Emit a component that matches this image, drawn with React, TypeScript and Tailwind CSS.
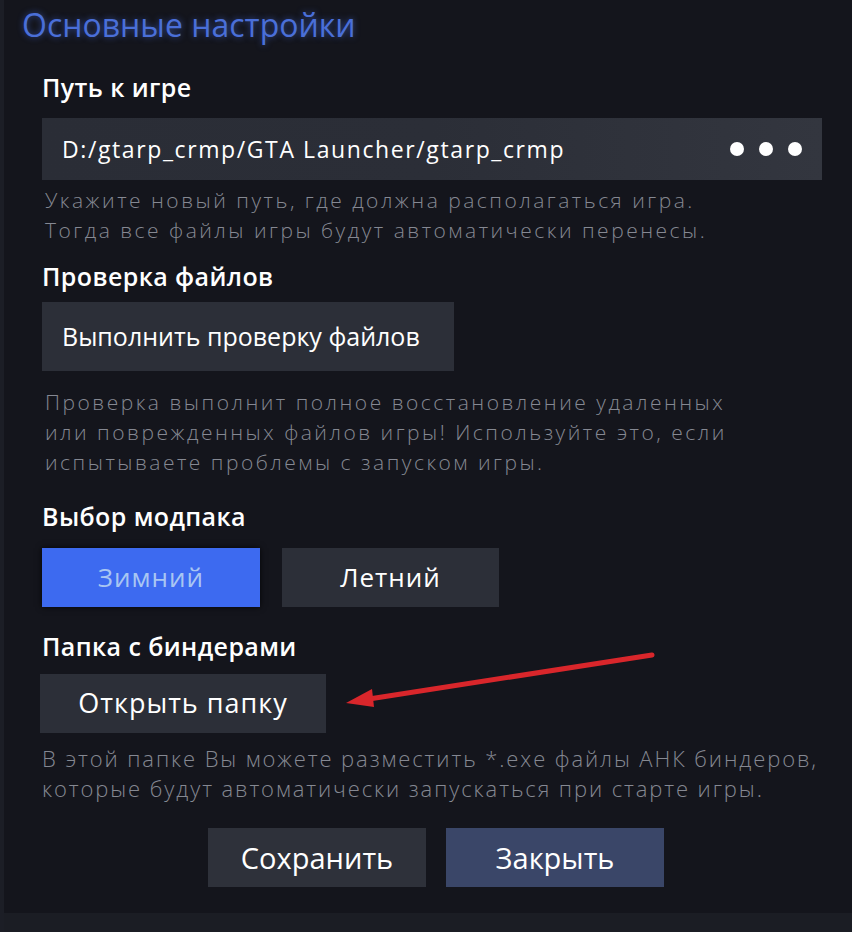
export default function App() {
  const font = { fontFamily: '"Open Sans", "Noto Sans", sans-serif' };

  return (
    <div
      className="relative w-[852px] h-[932px] bg-[#14151c] flex flex-col overflow-hidden border-l-[4px] border-[#1c1e26]"
      style={font}
    >
      {/* Title */}
      <h1 className="ml-[18px] mt-[5px] h-[40px] leading-[40px] text-[32px] font-normal text-[#4a6fd8] [text-shadow:0_0_6px_rgba(70,110,230,0.6)]">
        Основные настройки
      </h1>

      <div className="flex flex-col pl-[38px] pr-[20px] flex-1">
        {/* Путь к игре */}
        <h2 className="mt-[26px] leading-[32px] text-[25px] font-semibold text-white tracking-[0.4px]">
          Путь к игре
        </h2>
        <div className="mt-[15px] h-[62px] w-[780px] flex items-center justify-between pl-[20px] pr-[20px] bg-gradient-to-r from-[#2a2d36] via-[#2b2e37] to-[#33363f]">
          <span className="text-[23px] font-medium text-white tracking-[1.6px]">
            D:/gtarp_crmp/GTA Launcher/gtarp_crmp
          </span>
          <div className="flex gap-[15px]">
            <span className="w-[14px] h-[14px] rounded-full bg-white" />
            <span className="w-[14px] h-[14px] rounded-full bg-white" />
            <span className="w-[14px] h-[14px] rounded-full bg-white" />
          </div>
        </div>
        <p className="mt-[5px] ml-[3px] text-[21px] leading-[30px] font-light text-[#858892] tracking-[2.5px]">
          Укажите новый путь, где должна располагаться игра.
          <br />
          Тогда все файлы игры будут автоматически перенесы.
        </p>

        {/* Проверка файлов */}
        <h2 className="mt-[15px] leading-[32px] text-[25px] font-semibold text-white tracking-[0.4px]">
          Проверка файлов
        </h2>
        <button className="mt-[10px] self-start h-[69px] w-[412px] pl-[20px] text-left bg-[#2c2f38] text-[25px] font-medium text-white">
          Выполнить проверку файлов
        </button>
        <p className="mt-[16px] ml-[3px] text-[21px] leading-[30px] font-light text-[#858892] tracking-[2.5px]">
          Проверка выполнит полное восстановление удаленных
          <br />
          или поврежденных файлов игры! Используйте это, если
          <br />
          испытываете проблемы с запуском игры.
        </p>

        {/* Выбор модпака */}
        <h2 className="mt-[23px] leading-[32px] text-[25px] font-semibold text-white tracking-[0.4px]">
          Выбор модпака
        </h2>
        <div className="mt-[16px] flex gap-[22px]">
          <button className="h-[59px] w-[218px] bg-[#3d6af0] text-[26px] text-[#a9c6f2] tracking-[1px] shadow-[0_0_6px_rgba(0,0,0,0.8)]">
            Зимний
          </button>
          <button className="h-[59px] w-[217px] bg-[#2c2f38] text-[26px] text-white tracking-[1px]">
            Летний
          </button>
        </div>

        {/* Папка с биндерами */}
        <h2 className="mt-[23px] leading-[32px] text-[25px] font-semibold text-white tracking-[0.4px]">
          Папка с биндерами
        </h2>
        <button className="mt-[12px] -ml-[2px] self-start h-[59px] w-[286px] bg-[#2c2f38] text-[27px] text-white tracking-[1px]">
          Открыть папку
        </button>
        <p className="mt-[10px] text-[22px] leading-[30px] font-light text-[#858892] tracking-[1.9px] whitespace-nowrap">
          В этой папке Вы можете разместить *.exe файлы АНК биндеров,
          <br />
          которые будут автоматически запускаться при старте игры.
        </p>

        {/* Actions */}
        <div className="mt-[25px] flex justify-center gap-[20px] pr-[2px]">
          <button className="h-[59px] w-[218px] bg-[#2e313a] text-[29px] text-white">
            Сохранить
          </button>
          <button className="h-[59px] w-[218px] bg-[#3a4668] text-[29px] text-white">
            Закрыть
          </button>
        </div>
      </div>

      {/* Bottom strip */}
      <div className="h-[19px] bg-[#1b1d24]" />

      {/* Red annotation arrow */}
      <svg
        className="absolute left-0 top-0 pointer-events-none"
        width="852"
        height="932"
        viewBox="0 0 852 932"
      >
        <line
          x1="648"
          y1="655"
          x2="365"
          y2="699"
          stroke="#d9262b"
          strokeWidth="5"
          strokeLinecap="round"
        />
        <polygon points="342,703 368,689 370,707" fill="#d9262b" />
      </svg>
    </div>
  );
}
